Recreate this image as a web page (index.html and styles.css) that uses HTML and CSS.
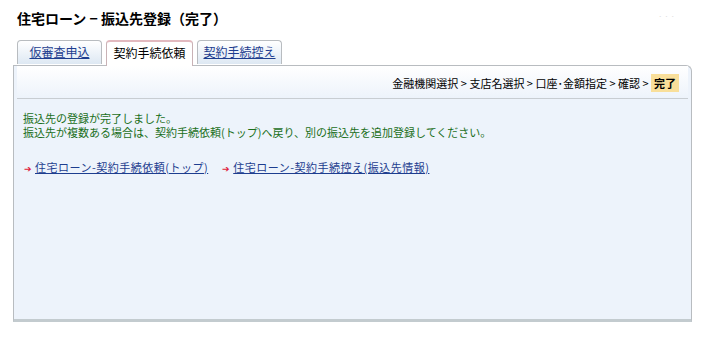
FILE: index.html
```html
<!DOCTYPE html>
<html lang="ja">
<head>
    <meta charset="UTF-8">
    <title>住宅ローン − 振込先登録(完了)</title>
    <link rel="stylesheet" href="styles.css">
</head>
<body>
    <div class="page">
        <div class="header">
            <h1>住宅ローン − 振込先登録（完了）</h1>
            <span class="dots">· · ·</span>
        </div>
        <ul class="tabs">
            <li class="tab"><a href="#">仮審査申込</a></li>
            <li class="tab active">契約手続依頼</li>
            <li class="tab"><a href="#">契約手続控え</a></li>
        </ul>
        <div class="panel">
            <div class="steps">
                金融機関選択 &gt; 支店名選択 &gt; 口座･金額指定 &gt; 確認 &gt; <span class="current">完了</span>
            </div>
            <div class="body">
                <p class="message">振込先の登録が完了しました。</p>
                <p class="message">振込先が複数ある場合は、契約手続依頼(トップ)へ戻り、別の振込先を追加登録してください。</p>
                <div class="links">
                    <a href="#"><span class="arrow">➔</span><span class="text">住宅ローン-契約手続依頼(トップ)</span></a>
                    <a href="#"><span class="arrow">➔</span><span class="text">住宅ローン-契約手続控え(振込先情報)</span></a>
                </div>
            </div>
        </div>
    </div>
</body>
</html>
```

FILE: styles.css
```css
body {
    margin: 0;
    background: #fff;
    font-family: "Noto Sans CJK JP", "Liberation Sans", sans-serif;
    color: #000;
}
.page {
    padding: 8px 9px 0 13px;
}
.header {
    display: flex;
    justify-content: space-between;
    align-items: center;
    padding-left: 4px;
}
h1 {
    font-size: 14px;
    font-weight: bold;
    margin: 0;
    line-height: 20px;
}
.dots {
    color: #ddd;
    font-size: 8px;
    margin-right: 17px;
    margin-top: -6px;
}
.tabs {
    list-style: none;
    display: flex;
    gap: 4px;
    margin: 12px 0 0 4px;
    padding: 0;
    position: relative;
    z-index: 1;
}
.tab {
    width: 83px;
    height: 23px;
    line-height: 22px;
    font-size: 12px;
    text-align: center;
    border: 1px solid #b8bcc0;
    border-bottom: none;
    border-radius: 4px 4px 0 0;
    background: linear-gradient(#ffffff, #dde8f3);
}
.tab a {
    color: #1d3d8f;
}
.tab.active {
    width: 85px;
    background: #fff;
    border-color: #c9b2b6;
    border-top: 2px solid #e2b9bf;
    height: 24px;
    margin-bottom: -1px;
}
.panel {
    border: 1px solid #b8bcc0;
    border-bottom: 3px solid #c3cbcf;
    border-radius: 0 6px 0 0;
    background: #edf3fb;
    height: 253px;
}
.steps {
    font-size: 11px;
    text-align: right;
    padding: 0 9px 0 0;
    margin: 0 3px;
    height: 32px;
    line-height: 34px;
    border-bottom: 1px solid #c8cdd2;
    background: linear-gradient(#ffffff, #edf3fb);
}
.current {
    background: #f9df9a;
    font-weight: bold;
    padding: 1px 3px;
}
.body {
    padding: 12px 9px;
}
.message {
    margin: 0;
    font-size: 11px;
    line-height: 14px;
    color: #1a6f1a;
}
.links {
    margin-top: 20px;
    display: flex;
    gap: 14px;
    padding-left: 1px;
}
.links a {
    font-size: 11px;
    color: #1d3d8f;
    text-decoration: none;
}
.links .text {
    text-decoration: underline;
    letter-spacing: 0.5px;
}
.arrow {
    color: #e0203a;
    font-size: 9px;
    margin-right: 3px;
}
```
